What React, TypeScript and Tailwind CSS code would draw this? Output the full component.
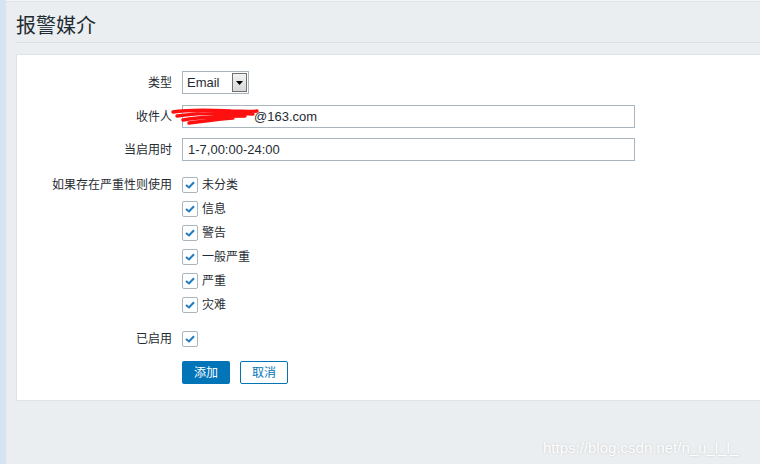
import React from 'react';

const font = { fontFamily: '"Liberation Sans", "Noto Sans CJK SC", sans-serif' };

const severities = ['未分类', '信息', '警告', '一般严重', '严重', '灾难'];

const Check: React.FC = () => (
  <span className="flex h-4 w-4 items-center justify-center rounded-[2px] border border-[#a9b6c0] bg-white">
    <svg width="10" height="8" viewBox="0 0 10 8">
      <path d="M1 4 L4 6.5 L9 1.2" fill="none" stroke="#1f7bc0" strokeWidth="2" />
    </svg>
  </span>
);

const Row: React.FC<{ label: string; children: React.ReactNode; className?: string }> = ({ label, children, className }) => (
  <div className={`flex items-center ${className ?? ''}`}>
    <div className="w-[165px] pr-[10px] text-right text-[12px] text-[#1f2c33]">{label}</div>
    <div className="flex-1">{children}</div>
  </div>
);

export default function App() {
  return (
    <div className="relative flex h-[464px] w-[760px] overflow-hidden bg-[#ebeef0]" style={font}>
      <div className="w-[6px] bg-[#d6e3f0]" />
      <div className="flex flex-1 flex-col">
        <div className="h-[2px] bg-[#f4f5f6] border-b border-[#dfe3e6]" />
        <div className="ml-[10px] flex flex-col">
          <div className="flex h-[41px] items-center border-b border-[#dce0e3] pt-[8px] text-[20px] text-[#1f2c33]">报警媒介</div>
          <div className="mt-[11px] h-[347px] border-y border-l border-[#dfe3e6] bg-white pt-[16px]">
            <Row label="类型">
              <div className="flex h-[23px] w-[67px] items-center border border-[#a9b6c0] bg-white">
                <span className="flex-1 pl-[4px] text-[13px] text-[#1f2c33]">Email</span>
                <span className="mr-[1px] flex h-[19px] w-[15px] items-center justify-center border border-[#707070] bg-gradient-to-b from-[#f2f2f2] to-[#d8d8d8]">
                  <svg width="7" height="4" viewBox="0 0 7 4"><path d="M0 0 H7 L3.5 4 Z" fill="#000" /></svg>
                </span>
              </div>
            </Row>
            <Row label="收件人" className="mt-[11px]">
              <div className="relative flex h-[23px] w-[453px] items-center border border-[#a9b6c0] pl-[5px] text-[13px] text-[#1f2c33]">
                <span className="pl-[66px]">@163.com</span>
                <svg className="absolute left-[-12px] top-[1px]" width="92" height="20" viewBox="0 0 92 20">
                  <path d="M2 5 C20 2 40 3 60 4 C70 4 78 5 86 4 M6 9 C25 6 45 5 82 7 M12 13 C30 10 50 9 74 9 M18 16 C34 14 48 12 62 11" fill="none" stroke="#ff1010" strokeWidth="3.4" strokeLinecap="round" />
                </svg>
              </div>
            </Row>
            <Row label="当启用时" className="mt-[10px]">
              <div className="flex h-[23px] w-[453px] items-center border border-[#a9b6c0] pl-[5px] text-[13px] text-[#1f2c33]">1-7,00:00-24:00</div>
            </Row>
            <div className="mt-[16px] flex items-start">
              <div className="w-[165px] pr-[10px] text-right text-[12px] leading-4 text-[#1f2c33]">如果存在严重性则使用</div>
              <div className="flex flex-col gap-[8px]">
                {severities.map((s) => (
                  <div key={s} className="flex items-center gap-[4px] text-[12px] leading-4 text-[#1f2c33]">
                    <Check />
                    <span>{s}</span>
                  </div>
                ))}
              </div>
            </div>
            <Row label="已启用" className="mt-[17px]">
              <Check />
            </Row>
            <div className="mt-[13px] flex gap-[10px] pl-[165px]">
              <button className="h-[23px] w-[48px] rounded-[2px] bg-[#0275b8] text-[12px] text-white">添加</button>
              <button className="h-[23px] w-[48px] rounded-[2px] border border-[#0275b8] bg-white text-[12px] text-[#0275b8]">取消</button>
            </div>
          </div>
        </div>
      </div>
      <div className="absolute left-[543px] top-[437px] text-[15px] text-white" style={{ textShadow: '0 0 2px rgba(0,0,0,0.18)' }}>
        https://blog.csdn.net/n_u_l_l_
      </div>
    </div>
  );
}
